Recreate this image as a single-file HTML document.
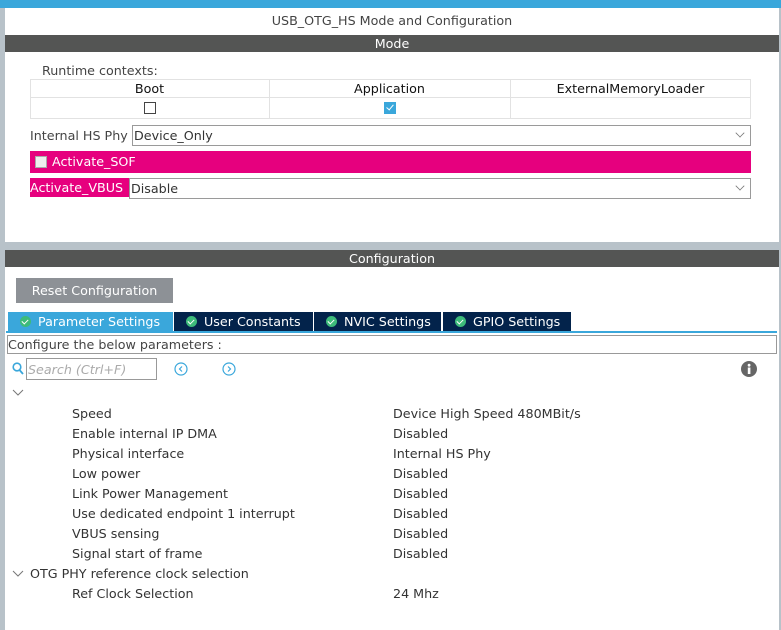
<!DOCTYPE html>
<html><head><meta charset="utf-8"><style>
*{margin:0;padding:0;box-sizing:border-box}
body{width:781px;height:630px;overflow:hidden;background:#b8c2c9;font-family:"DejaVu Sans","Liberation Sans",sans-serif;font-size:12.7px;color:#333;position:relative}
.a{position:absolute;white-space:nowrap}
.bar{position:absolute;left:5px;width:774px;height:17px;background:#545554;color:#fff;text-align:center;line-height:17px}
.sel{position:absolute;border:1px solid #9a9a9a;background:#fff;line-height:19px;padding-left:1px}
.chev{position:absolute;right:6px;width:8px;height:8px;border-right:1px solid #777;border-bottom:1px solid #777;transform:rotate(45deg) scale(.8,.8);top:3px}
.tab{position:absolute;top:312px;height:19px;background:#03234b;color:#fff;line-height:19px;padding-left:30px}
.ok{position:absolute;left:12px;top:4px;width:11px;height:11px;border-radius:50%;background:#3dbb7a}
.ok:after{content:"";position:absolute;left:3px;top:2px;width:3px;height:5px;border-right:1.5px solid #fff;border-bottom:1.5px solid #fff;transform:rotate(45deg)}
.row{position:absolute;left:72px;height:20px;line-height:20px}
.val{position:absolute;left:393px;height:20px;line-height:20px}
</style></head><body>
<div class="a" style="left:0;top:0;width:781px;height:8px;background:#3aa7db"></div>
<div class="a" style="left:5px;top:8px;width:774px;height:234px;background:#fff"></div>
<div class="a" style="left:5px;top:13px;width:774px;text-align:center;color:#444">USB_OTG_HS Mode and Configuration</div>
<div class="bar" style="top:35px">Mode</div>
<div class="a" style="left:42px;top:63px;color:#444">Runtime contexts:</div>
<div class="a" style="left:30px;top:79px;width:721px;height:40px;border:1px solid #e2e2e2"></div>
<div class="a" style="left:30px;top:97px;width:721px;height:1px;background:#e2e2e2"></div>
<div class="a" style="left:269px;top:79px;width:1px;height:40px;background:#e2e2e2"></div>
<div class="a" style="left:510px;top:79px;width:1px;height:40px;background:#e2e2e2"></div>
<div class="a" style="left:30px;top:81px;width:239px;text-align:center;color:#111">Boot</div>
<div class="a" style="left:269px;top:81px;width:241px;text-align:center;color:#111">Application</div>
<div class="a" style="left:510px;top:81px;width:241px;text-align:center;color:#111">ExternalMemoryLoader</div>
<div class="a" style="left:144px;top:102px;width:12px;height:12px;border:1px solid #444"></div>
<div class="a" style="left:384px;top:102px;width:12px;height:12px;background:#3aa7db"><div style="position:absolute;left:4px;top:1px;width:4px;height:7px;border-right:1px solid #fff;border-bottom:1px solid #fff;transform:rotate(40deg)"></div></div>
<div class="a" style="left:30px;top:128px;color:#444">Internal HS Phy</div>
<div class="sel" style="left:132px;top:125px;width:619px;height:21px">Device_Only<div class="chev"></div></div>
<div class="a" style="left:30px;top:151px;width:721px;height:22px;background:#e6007e"></div>
<div class="a" style="left:35px;top:156px;width:12px;height:12px;background:#eee;border:1px solid #aaa"></div>
<div class="a" style="left:52px;top:154px;color:#fff">Activate_SOF</div>
<div class="a" style="left:30px;top:178px;width:100px;height:19px;background:#e6007e;color:#fff;line-height:19px">Activate_VBUS</div>
<div class="sel" style="left:129px;top:178px;width:622px;height:21px">Disable<div class="chev"></div></div>
<div class="a" style="left:5px;top:267px;width:774px;height:363px;background:#fff"></div>
<div class="bar" style="top:250px">Configuration</div>
<div class="a" style="left:16px;top:278px;width:157px;height:25px;background:#8d9196;color:#fff;text-align:center;line-height:25px">Reset Configuration</div>
<div class="tab" style="left:8px;width:165px;background:#3aa7db"><div class="ok"></div>Parameter Settings</div>
<div class="tab" style="left:174px;width:139px"><div class="ok"></div>User Constants</div>
<div class="tab" style="left:314px;width:127px"><div class="ok"></div>NVIC Settings</div>
<div class="tab" style="left:443px;width:128px"><div class="ok"></div>GPIO Settings</div>
<div class="a" style="left:6px;top:331px;width:771px;height:2px;background:#3aa7db"></div>
<div class="a" style="left:7px;top:335px;width:770px;height:19px;border:1px solid #999;line-height:17px;padding-left:0;color:#444">Configure the below parameters :</div>
<svg class="a" style="left:12px;top:362px" width="12" height="13"><circle cx="5" cy="5" r="3.8" fill="none" stroke="#3aa7db" stroke-width="1.6"/><line x1="7.5" y1="8" x2="11" y2="12" stroke="#3aa7db" stroke-width="1.8"/></svg>
<div class="a" style="left:26px;top:358px;width:131px;height:22px;border:1px solid #999;line-height:21px;padding-left:1px;color:#aaa;font-style:italic">Search (Ctrl+F)</div>
<svg class="a" style="left:174px;top:362px" width="14" height="14"><circle cx="7" cy="7" r="6" fill="none" stroke="#3aa7db" stroke-width="1.2"/><path d="M8 4.5L5.5 7L8 9.5" fill="none" stroke="#3aa7db" stroke-width="1.2"/></svg>
<svg class="a" style="left:222px;top:362px" width="14" height="14"><circle cx="7" cy="7" r="6" fill="none" stroke="#3aa7db" stroke-width="1.2"/><path d="M6 4.5L8.5 7L6 9.5" fill="none" stroke="#3aa7db" stroke-width="1.2"/></svg>
<svg class="a" style="left:741px;top:361px" width="16" height="16"><circle cx="8" cy="8" r="8" fill="#666"/><rect x="6.8" y="6.5" width="2.6" height="6.5" fill="#fff"/><circle cx="8.1" cy="4.2" r="1.4" fill="#fff"/></svg>
<svg class="a" style="left:12px;top:389px" width="12" height="8"><path d="M1 1L6 6L11 1" fill="none" stroke="#777"/></svg>
<div class="row" style="top:404px">Speed</div><div class="val" style="top:404px">Device High Speed 480MBit/s</div>
<div class="row" style="top:424px">Enable internal IP DMA</div><div class="val" style="top:424px">Disabled</div>
<div class="row" style="top:444px">Physical interface</div><div class="val" style="top:444px">Internal HS Phy</div>
<div class="row" style="top:464px">Low power</div><div class="val" style="top:464px">Disabled</div>
<div class="row" style="top:484px">Link Power Management</div><div class="val" style="top:484px">Disabled</div>
<div class="row" style="top:504px">Use dedicated endpoint 1 interrupt</div><div class="val" style="top:504px">Disabled</div>
<div class="row" style="top:524px">VBUS sensing</div><div class="val" style="top:524px">Disabled</div>
<div class="row" style="top:544px">Signal start of frame</div><div class="val" style="top:544px">Disabled</div>
<svg class="a" style="left:12px;top:570px" width="12" height="8"><path d="M1 1L6 6L11 1" fill="none" stroke="#777"/></svg>
<div class="row" style="top:564px;left:30px">OTG PHY reference clock selection</div>
<div class="row" style="top:584px">Ref Clock Selection</div><div class="val" style="top:584px">24 Mhz</div>
</body></html>
